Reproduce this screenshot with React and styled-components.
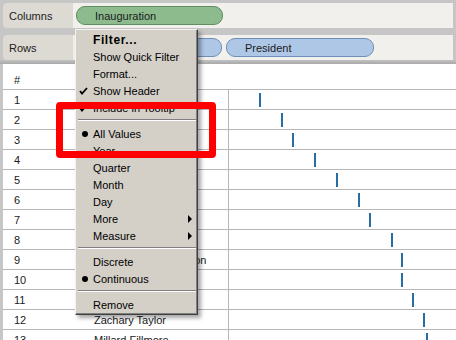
import React from "react";
import styled, { createGlobalStyle } from "styled-components";

const GlobalStyle = createGlobalStyle`
  html, body {
    margin: 0;
    padding: 0;
    background: #c6c6c6;
  }
  body {
    font-family: "Liberation Sans", Arial, sans-serif;
    font-size: 11px;
    color: #111;
  }
`;

const presidents = [
  ["George Washington", 1789],
  ["John Adams", 1797],
  ["Thomas Jefferson", 1801],
  ["James Madison", 1809],
  ["James Monroe", 1817],
  ["John Quincy Adams", 1825],
  ["Andrew Jackson", 1829],
  ["Martin Van Buren", 1837],
  ["William Henry Harrison", 1841],
  ["John Tyler", 1841],
  ["James K. Polk", 1845],
  ["Zachary Taylor", 1849],
  ["Millard Fillmore", 1850],
];

const menuItems = [
  { label: "Filter...", bold: true },
  { label: "Show Quick Filter" },
  { label: "Format..." },
  { label: "Show Header", mark: "check" },
  { label: "Include in Tooltip", mark: "check" },
  { sep: true },
  { label: "All Values", mark: "dot" },
  { label: "Year" },
  { label: "Quarter" },
  { label: "Month" },
  { label: "Day" },
  { label: "More", sub: true },
  { label: "Measure", sub: true },
  { sep: true },
  { label: "Discrete" },
  { label: "Continuous", mark: "dot" },
  { sep: true },
  { label: "Remove" },
];

const Page = styled.div`
  position: relative;
  width: 456px;
  height: 340px;
  overflow: hidden;
  background: #c6c6c6;
  display: flex;
  flex-direction: column;
  padding-top: 3px;
  box-sizing: border-box;
`;

const Shelves = styled.div`
  display: flex;
  flex-direction: column;
  gap: 7px;
  padding: 0 3px;
`;

const ShelfRow = styled.div`
  display: flex;
  height: 25px;
`;

const ShelfLabel = styled.div`
  width: 64px;
  padding-left: 6px;
  display: flex;
  align-items: center;
  background: #dddad3;
  border-radius: 4px 0 0 4px;
  color: #222;
`;

const ShelfDrop = styled.div`
  flex: 1;
  display: flex;
  align-items: center;
  gap: 4px;
  padding-left: 3px;
  background: #f1f0ed;
`;

const Pill = styled.div`
  box-sizing: border-box;
  width: ${(p) => p.$w}px;
  height: 19px;
  padding-left: 18px;
  display: flex;
  align-items: center;
  border-radius: 9px;
  background: ${(p) => (p.$kind === "green" ? "#8dbb8e" : "#aec7e6")};
  border: 1px solid ${(p) => (p.$kind === "green" ? "#5f8f61" : "#6f8fb8")};
  color: #1a1a1a;
`;

const Divider = styled.div`
  height: 4px;
  background: linear-gradient(#c2c2c2, #a9a9a9);
`;

const Table = styled.div`
  flex: 1;
  margin-left: 3px;
  background: #fff;
  overflow: hidden;
`;

const Row = styled.div`
  display: grid;
  grid-template-columns: 80px 145px 1fr;
  height: ${(p) => (p.$header ? 26 : 20)}px;
  box-sizing: border-box;
  border-bottom: 1px solid #b6b6b6;
  color: #1a1a1a;
`;

const Cell = styled.div`
  display: flex;
  align-items: ${(p) => (p.$header ? "flex-end" : "center")};
  padding-left: 11px;
  padding-bottom: ${(p) => (p.$header ? 3 : 0)}px;
  white-space: nowrap;
`;

const ChartCell = styled.div`
  position: relative;
  border-left: ${(p) => (p.$header ? "none" : "1px solid #b6b6b6")};
`;

const Tick = styled.span`
  position: absolute;
  top: 3px;
  width: 2px;
  height: 14px;
  background: #2b6ca3;
`;

const Menu = styled.div`
  position: absolute;
  left: 75px;
  top: 29px;
  width: 123px;
  box-sizing: border-box;
  padding: 1px 0 1px;
  background: #d4d0c8;
  border-top: 1px solid #f4f3ef;
  border-left: 1px solid #f4f3ef;
  border-right: 1px solid #404040;
  border-bottom: 1px solid #404040;
  box-shadow: inset -1px -1px 0 #808080, 3px 3px 4px rgba(0, 0, 0, 0.35);
  color: #000;
`;

const Item = styled.div`
  display: grid;
  grid-template-columns: 16px 1fr 14px;
  align-items: center;
  height: 17px;
  padding-left: 1px;
  font-weight: ${(p) => (p.$bold ? "bold" : "normal")};
  font-size: ${(p) => (p.$bold ? 12 : 11)}px;
  letter-spacing: ${(p) => (p.$bold ? 0.6 : 0)}px;
`;

const Mark = styled.span`
  display: flex;
  justify-content: center;
  align-items: center;
`;

const Dot = styled.span`
  width: 6px;
  height: 6px;
  border-radius: 50%;
  background: #000;
`;

const Arrow = styled.span`
  width: 0;
  height: 0;
  border-top: 4px solid transparent;
  border-bottom: 4px solid transparent;
  border-left: 4px solid #000;
`;

const Separator = styled.div`
  margin: 3px 1px 4px 2px;
  height: 0;
  border-top: 1px solid #808080;
  border-bottom: 1px solid #fff;
`;

const Highlight = styled.div`
  position: absolute;
  left: 56px;
  top: 102px;
  width: 160px;
  height: 56px;
  box-sizing: border-box;
  border: 7px solid #ff0000;
  border-radius: 4px;
`;

const Check = () => (
  <svg width="9" height="8" viewBox="0 0 9 8" style={{ marginLeft: -4 }}>
    <path d="M1 4 L3 6.5 L8 1" fill="none" stroke="#000" strokeWidth="1.8" />
  </svg>
);

const tickX = (year) => 30 + (year - 1789) * 2.74;

export default function App() {
  return (
    <>
      <GlobalStyle />
      <Page>
        <Shelves>
          <ShelfRow>
            <ShelfLabel>Columns</ShelfLabel>
            <ShelfDrop>
              <Pill $kind="green" $w={147}>Inauguration</Pill>
            </ShelfDrop>
          </ShelfRow>
          <ShelfRow>
            <ShelfLabel>Rows</ShelfLabel>
            <ShelfDrop>
              <Pill $kind="blue" $w={146}>#</Pill>
              <Pill $kind="blue" $w={148}>President</Pill>
            </ShelfDrop>
          </ShelfRow>
        </Shelves>
        <Divider />
        <Table>
          <Row $header>
            <Cell $header>#</Cell>
            <Cell $header>President</Cell>
            <ChartCell $header />
          </Row>
          {presidents.map(([name, year], i) => (
            <Row key={name}>
              <Cell>{i + 1}</Cell>
              <Cell>{name}</Cell>
              <ChartCell>
                <Tick style={{ left: tickX(year) }} />
              </ChartCell>
            </Row>
          ))}
        </Table>

        <Menu>
          {menuItems.map((m, i) =>
            m.sep ? (
              <Separator key={i} />
            ) : (
              <Item key={i} $bold={m.bold}>
                <Mark>
                  {m.mark === "check" && <Check />}
                  {m.mark === "dot" && <Dot />}
                </Mark>
                <span>{m.label}</span>
                <Mark>{m.sub && <Arrow />}</Mark>
              </Item>
            )
          )}
        </Menu>

        <Highlight />
      </Page>
    </>
  );
}
